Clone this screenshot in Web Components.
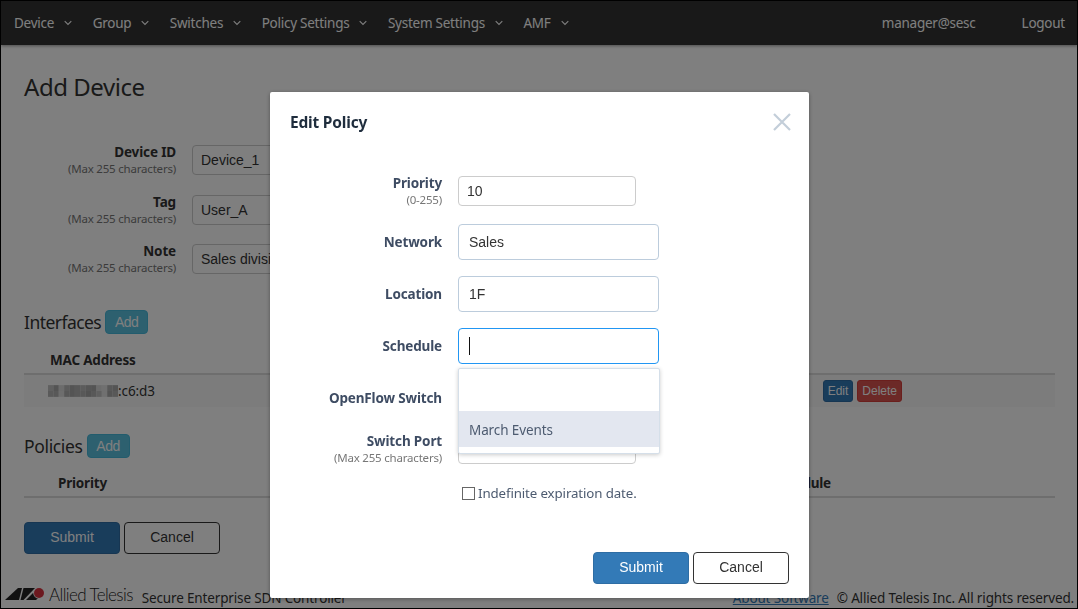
<!DOCTYPE html>
<html>
<head>
<meta charset="utf-8">
<title>Add Device</title>
<style>
	html, body { margin: 0; padding: 0; background: #fff; }
	body { font-family: "Noto Sans", sans-serif; font-size: 14px; color: #333; }
</style>
</head>
<body>
<at-app>
	<at-navbar>
		<at-nav-item>Device</at-nav-item>
		<at-nav-item>Group</at-nav-item>
		<at-nav-item>Switches</at-nav-item>
		<at-nav-item>Policy Settings</at-nav-item>
		<at-nav-item>System Settings</at-nav-item>
		<at-nav-item>AMF</at-nav-item>
		<span slot="right">manager@sesc</span>
		<span slot="right">Logout</span>
	</at-navbar>
	<at-device-page></at-device-page>
	<at-footer></at-footer>
	<at-modal heading="Edit Policy"><at-policy-form></at-policy-form></at-modal>
</at-app>

<script>
	const SANS = `"Noto Sans", "Open Sans", sans-serif`;
	const ARIAL = `"Liberation Sans", Arial, sans-serif`;

	class App extends HTMLElement {
		constructor() {
			super();
			this.attachShadow({ mode: "open" });
			this.shadowRoot.innerHTML = `
				<style>
					:host {
						display: flex;
						flex-direction: column;
						box-sizing: border-box;
						width: 1078px;
						height: 609px;
						border: 1px solid #000;
						overflow: hidden;
						background: #fff;
					}
				</style>
				<slot></slot>
			`;
		}
	}

	class Navbar extends HTMLElement {
		constructor() {
			super();
			this.attachShadow({ mode: "open" });
			this.shadowRoot.innerHTML = `
				<style>
					:host {
						display: flex;
						flex: none;
						align-items: center;
						justify-content: space-between;
						height: 44px;
						padding: 0 12px 1px 13px;
						box-sizing: border-box;
						background: #333;
						color: #fff;
						font-family: ${SANS};
						font-size: 13.5px;
						letter-spacing: -0.25px;
						box-shadow: 0 1px 3px rgba(0, 0, 0, 0.4);
						position: relative;
					}
					.left { display: flex; gap: 20.5px; }
					.right { display: flex; gap: 46px; }
					::slotted(span) { display: block; }
				</style>
				<div class="left"><slot></slot></div>
				<div class="right"><slot name="right"></slot></div>
			`;
		}
	}

	class NavItem extends HTMLElement {
		constructor() {
			super();
			this.attachShadow({ mode: "open" });
			this.shadowRoot.innerHTML = `
				<style>
					:host { display: flex; align-items: center; gap: 10px; }
					svg { display: block; margin-top: 1px; }
				</style>
				<slot></slot>
				<svg width="8" height="6" viewBox="0 0 8 6" fill="none" stroke="#fff" stroke-width="1.1">
					<path d="M0.7 1.2 L4 4.4 L7.3 1.2"/>
				</svg>
			`;
		}
	}

	// label on the left, control on the right. both forms use this.
	class Field extends HTMLElement {
		constructor() {
			super();
			this.attachShadow({ mode: "open" });
			const hint = this.getAttribute("hint");
			this.shadowRoot.innerHTML = `
				<style>
					:host {
						display: flex;
						align-items: center;
						gap: 16px;
						font-family: ${SANS};
						position: relative;
					}
					.label {
						flex: none;
						width: var(--label-width, 152px);
						text-align: right;
					}
					.name {
						font-size: 13.5px;
						font-weight: 700;
						letter-spacing: -0.15px;
						line-height: 18px;
						color: var(--label-color, #333);
					}
					.hint {
						font-size: 11.5px;
						letter-spacing: -0.2px;
						line-height: 16px;
						color: #777;
					}
				</style>
				<div class="label">
					<div class="name">${this.getAttribute("label")}</div>
					${hint ? `<div class="hint">${hint}</div>` : ""}
				</div>
				<slot></slot>
			`;
		}
	}

	class TextBox extends HTMLElement {
		constructor() {
			super();
			this.attachShadow({ mode: "open" });
			this.shadowRoot.innerHTML = `
				<style>
					:host {
						display: flex;
						align-items: center;
						box-sizing: border-box;
						flex: none;
						width: 201px;
						height: 36px;
						padding: 0 10px 1px;
						border: 1px solid #bcccdc;
						border-radius: 4px;
						background: #fff;
						color: #333;
						font-family: ${ARIAL};
						font-size: 14px;
					}
					:host([small]) {
						width: 178px;
						height: 30px;
						padding: 0 8px;
						border-color: #ccc;
					}
					:host([focused]) { border-color: #2196f3; }
					.caret { width: 1px; height: 18px; background: #111; display: none; }
					:host([focused]) .caret { display: block; }
				</style>
				<slot></slot><span class="caret"></span>
			`;
		}
	}

	class Button extends HTMLElement {
		constructor() {
			super();
			this.attachShadow({ mode: "open" });
			this.shadowRoot.innerHTML = `
				<style>
					:host {
						display: inline-flex;
						align-items: center;
						justify-content: center;
						box-sizing: border-box;
						flex: none;
						width: 96px;
						height: 32px;
						padding-bottom: 2px;
						border: 1px solid #333;
						border-radius: 4px;
						background: #fff;
						color: #333;
						font-family: ${ARIAL};
						font-size: 14px;
					}
					:host([kind="primary"]) { background: #337ab7; border-color: #2e6da4; color: #fff; }
					:host([kind="info"]) { background: #5bc0de; border-color: #46b8da; color: #fff; }
					:host([kind="danger"]) { background: #d9534f; border-color: #d43f3a; color: #fff; }
					:host([size="sm"]) { width: 43px; height: 24px; padding-bottom: 0; }
					:host([size="xs"]) { width: auto; min-width: 30px; height: 22px; padding: 0 4px; font-size: 12px; border-radius: 3px; }
				</style>
				<slot></slot>
			`;
		}
	}

	// the blurred out part of the mac address
	class Mosaic extends HTMLElement {
		constructor() {
			super();
			this.attachShadow({ mode: "open" });
			const rows = [
				[0xc0, 0xa8, 0xd8, 0xb8, 0xa8, 0xb0, 0xb8, 0xac, 0xa8, 0xd8, 0xe0, 0xb0, 0xa8],
				[0xb4, 0xb0, 0xdc, 0xb0, 0xa8, 0xb0, 0xb0, 0xa4, 0xb0, 0xc0, 0xe0, 0xa8, 0xb0],
			];
			let cells = "";
			rows.forEach((row, y) => row.forEach((v, x) => {
				cells += `<rect x="${x * 5.5}" y="${y * 6}" width="5.5" height="6" fill="rgb(${v},${v},${v})"/>`;
			}));
			this.shadowRoot.innerHTML = `
				<style>
					:host { display: inline-block; }
					svg { display: block; filter: blur(0.6px); }
				</style>
				<svg width="70" height="12" viewBox="0 0 71.5 12">${cells}</svg>
			`;
		}
	}

	class DataTable extends HTMLElement {
		constructor() {
			super();
			this.attachShadow({ mode: "open" });
			this.shadowRoot.innerHTML = `
				<style>
					:host {
						display: block;
						font-family: ${SANS};
						font-size: 13.5px;
						color: #333;
					}
					.head {
						display: flex;
						align-items: center;
						height: 27px;
						border-bottom: 2px solid #ddd;
						font-weight: 700;
						letter-spacing: -0.2px;
					}
					::slotted([slot="head"]) { display: block; }
				</style>
				<div class="head"><slot name="head"></slot></div>
				<slot></slot>
			`;
		}
	}

	class DevicePage extends HTMLElement {
		constructor() {
			super();
			this.attachShadow({ mode: "open" });
			this.shadowRoot.innerHTML = `
				<style>
					:host {
						display: block;
						flex: 1;
						padding: 0 22px 0 23px;
						font-family: ${SANS};
						color: #333;
					}
					h1 {
						margin: 26px 0 40px;
						font-size: 24px;
						font-weight: 400;
						line-height: 32px;
						letter-spacing: -0.45px;
					}
					.fields { display: flex; flex-direction: column; gap: 15.5px; }
					at-field { --label-width: 152px; }
					at-text-box { width: 200px; }
					.section {
						display: flex;
						align-items: center;
						gap: 4px;
						font-size: 17.5px;
						letter-spacing: -0.35px;
						height: 24px;
					}
					.interfaces { margin-top: 34px; letter-spacing: -0.55px; }
					.policies { margin-top: 27px; }
					.mac-table { margin-top: 12px; }
					.policy-table { margin-top: 11px; }
					.mac-head { margin-left: 26px; }
					.row {
						display: flex;
						align-items: center;
						justify-content: space-between;
						height: 32px;
						padding: 0 153px 0 24px;
						background: #f9f9f9;
						font-family: ${SANS};
						font-size: 13.5px;
					}
					.mac { display: flex; align-items: center; letter-spacing: -0.1px; }
					.actions { display: flex; gap: 4px; }
					.priority { margin-left: 34px; }
					.schedule { margin-left: 665px; }
					.buttons { display: flex; gap: 4px; margin-top: 24px; }
				</style>
				<h1>Add Device</h1>
				<div class="fields">
					<at-field label="Device ID" hint="(Max 255 characters)"><at-text-box small>Device_1</at-text-box></at-field>
					<at-field label="Tag" hint="(Max 255 characters)"><at-text-box small>User_A</at-text-box></at-field>
					<at-field label="Note" hint="(Max 255 characters)"><at-text-box small>Sales division</at-text-box></at-field>
				</div>
				<div class="section interfaces">Interfaces <at-button kind="info" size="sm">Add</at-button></div>
				<at-data-table class="mac-table">
					<span slot="head" class="mac-head">MAC Address</span>
					<div class="row">
						<span class="mac"><at-mosaic></at-mosaic>:c6:d3</span>
						<span class="actions">
							<at-button kind="primary" size="xs">Edit</at-button>
							<at-button kind="danger" size="xs">Delete</at-button>
						</span>
					</div>
				</at-data-table>
				<div class="section policies">Policies <at-button kind="info" size="sm">Add</at-button></div>
				<at-data-table class="policy-table">
					<span slot="head" class="priority">Priority</span>
					<span slot="head" class="schedule">Schedule</span>
				</at-data-table>
				<div class="buttons">
					<at-button kind="primary">Submit</at-button>
					<at-button>Cancel</at-button>
				</div>
			`;
		}
	}

	class Footer extends HTMLElement {
		constructor() {
			super();
			this.attachShadow({ mode: "open" });
			this.shadowRoot.innerHTML = `
				<style>
					:host {
						display: flex;
						flex: none;
						align-items: center;
						justify-content: space-between;
						box-sizing: border-box;
						height: 24px;
						padding: 4px 3px 0 4px;
						font-family: ${SANS};
						font-size: 13.5px;
						letter-spacing: -0.15px;
						color: #333;
					}
					.brand { display: flex; align-items: center; }
					svg { display: block; margin-top: -8px; }
					.logo-text {
						margin: -7px 9px 0 4px;
						font-family: Lato, sans-serif;
						font-size: 17px;
						font-weight: 300;
						letter-spacing: -0.6px;
						color: #222;
					}
					.meta { display: flex; gap: 8px; }
					a { color: #337ab7; text-decoration: underline; }
				</style>
				<div class="brand">
					<svg width="40" height="12" viewBox="0 0 40 12">
						<path d="M0 12 L13 0 H17 L14 12 Z" fill="#222"/>
						<path d="M15.5 12 L18.5 0 H30 L18.5 12 Z" fill="#222"/>
						<path d="M21 12 L28 5 H39 L31 12 Z" fill="#222"/>
						<circle cx="34" cy="5" r="5.8" fill="#fff"/>
						<circle cx="34" cy="5" r="5" fill="#d9333f"/>
					</svg>
					<span class="logo-text">Allied Telesis</span>
					<span>Secure Enterprise SDN Controller</span>
				</div>
				<div class="meta">
					<a href="#">About Software</a>
					<span>© Allied Telesis Inc. All rights reserved.</span>
				</div>
			`;
		}
	}

	class Modal extends HTMLElement {
		constructor() {
			super();
			this.attachShadow({ mode: "open" });
			this.shadowRoot.innerHTML = `
				<style>
					:host {
						position: fixed;
						inset: 0;
						display: flex;
						align-items: flex-start;
						padding: 92px 0 0 270px;
						background: rgba(0, 0, 0, 0.5);
					}
					.dialog {
						display: flex;
						flex-direction: column;
						box-sizing: border-box;
						width: 539px;
						height: 506px;
						padding: 20px;
						background: #fff;
						border-radius: 2px;
						box-shadow: 0 1px 4px rgba(0, 0, 0, 0.35);
					}
					header {
						display: flex;
						align-items: center;
						justify-content: space-between;
						height: 20px;
					}
					h2 {
						margin: 0;
						font-family: ${SANS};
						font-size: 15.5px;
						font-weight: 700;
						letter-spacing: -0.2px;
						color: #1f2d3d;
					}
					svg { display: block; margin-right: -2px; }
				</style>
				<div class="dialog">
					<header>
						<h2>${this.getAttribute("heading")}</h2>
						<svg width="18" height="18" viewBox="0 0 18 18" stroke="#c3ced9" stroke-width="2.2" fill="none">
							<path d="M1 1 L17 17 M17 1 L1 17"/>
						</svg>
					</header>
					<slot></slot>
				</div>
			`;
		}
	}

	class PolicyForm extends HTMLElement {
		constructor() {
			super();
			this.attachShadow({ mode: "open" });
			this.shadowRoot.innerHTML = `
				<style>
					:host {
						display: flex;
						flex-direction: column;
						flex: 1;
						margin-top: 42px;
						font-family: ${SANS};
					}
					.fields { display: flex; flex-direction: column; gap: 16px; --label-color: #3e4c63; --label-width: 152px; }
					.menu {
						position: absolute;
						top: 40px;
						left: 168px;
						z-index: 2;
						box-sizing: border-box;
						width: 202px;
						height: 86px;
						padding-top: 42px;
						background: #fff;
						border: 1px solid #d5dfe9;
						border-radius: 2px;
						box-shadow: 0 1px 4px rgba(0, 0, 0, 0.2);
						font-size: 13.5px;
						letter-spacing: -0.1px;
						color: #4d5b70;
					}
					.option {
						display: flex;
						align-items: center;
						box-sizing: border-box;
						height: 36px;
						padding: 2px 10px 0;
						background: #e3e7f0;
					}
					.check {
						display: flex;
						align-items: center;
						gap: 3px;
						margin: 18px 0 0 172px;
						font-size: 13.3px;
						letter-spacing: -0.12px;
						color: #4d5b70;
					}
					.box {
						box-sizing: border-box;
						width: 13px;
						height: 13px;
						border: 1px solid #666;
						background: #fff;
					}
					.actions {
						display: flex;
						justify-content: flex-end;
						gap: 4px;
						margin-top: auto;
						margin-bottom: -6px;
					}
				</style>
				<div class="fields">
					<at-field label="Priority" hint="(0-255)"><at-text-box small>10</at-text-box></at-field>
					<at-field label="Network"><at-text-box>Sales</at-text-box></at-field>
					<at-field label="Location"><at-text-box>1F</at-text-box></at-field>
					<at-field label="Schedule">
						<at-text-box focused></at-text-box>
						<div class="menu"><div class="option">March Events</div></div>
					</at-field>
					<at-field label="OpenFlow Switch"><at-text-box></at-text-box></at-field>
					<at-field label="Switch Port" hint="(Max 255 characters)"><at-text-box small></at-text-box></at-field>
				</div>
				<div class="check"><span class="box"></span>Indefinite expiration date.</div>
				<div class="actions">
					<at-button kind="primary">Submit</at-button>
					<at-button>Cancel</at-button>
				</div>
			`;
		}
	}

	customElements.define("at-app", App);
	customElements.define("at-navbar", Navbar);
	customElements.define("at-nav-item", NavItem);
	customElements.define("at-field", Field);
	customElements.define("at-text-box", TextBox);
	customElements.define("at-button", Button);
	customElements.define("at-mosaic", Mosaic);
	customElements.define("at-data-table", DataTable);
	customElements.define("at-device-page", DevicePage);
	customElements.define("at-footer", Footer);
	customElements.define("at-modal", Modal);
	customElements.define("at-policy-form", PolicyForm);
</script>
</body>
</html>
